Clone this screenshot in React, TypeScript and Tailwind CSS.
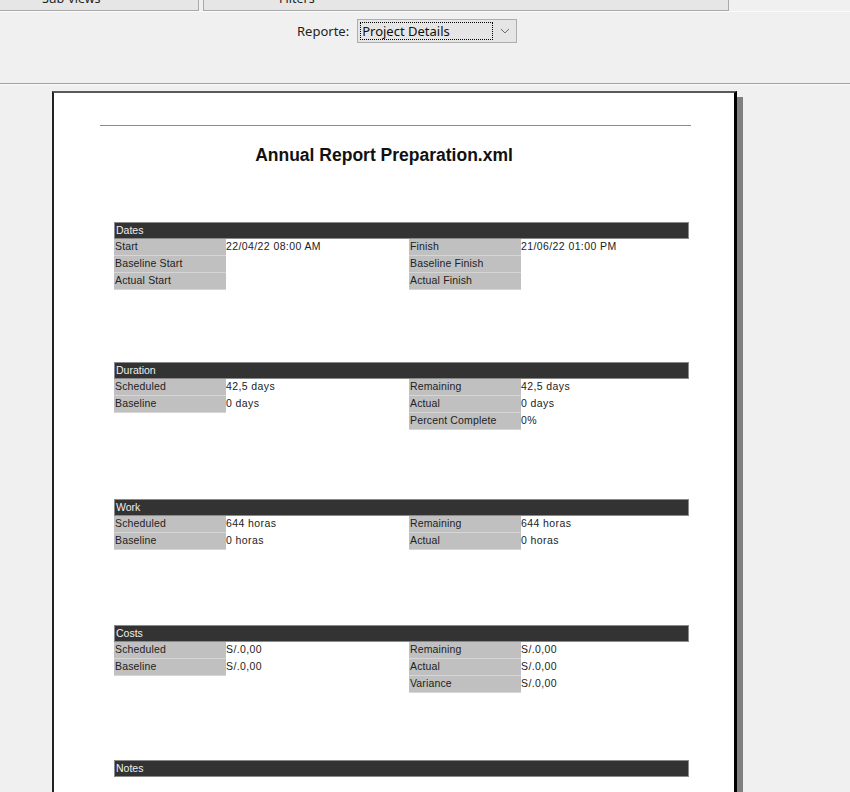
import React from "react";

type Row = [string, string];

const Section = ({ title, left, right, mt }: { title: string; left: Row[]; right: Row[]; mt: string }) => (
  <div className={`${mt} ml-[60px] w-[575px]`}>
    <div className="h-[17px] bg-[#333333] border border-[#8a8a8a] text-[10.5px] leading-[14px] text-[#eeeeee] pl-[1px]">{title}</div>
    <div className="flex">
      <div className="w-[295px] flex flex-col">
        {left.map(([l, v]) => (
          <div key={l} className="flex h-[17px]">
            <div className="w-[112px] bg-[#c0c0c0] border-b border-[#d6d6d6] text-[10.5px] leading-[14px] tracking-[0.15px] text-[#222] pl-[1px]">{l}</div>
            <div className="flex-1 text-[10.5px] leading-[14px] tracking-[0.4px] text-[#222]">{v}</div>
          </div>
        ))}
      </div>
      <div className="flex-1 flex flex-col">
        {right.map(([l, v]) => (
          <div key={l} className="flex h-[17px]">
            <div className="w-[112px] bg-[#c0c0c0] border-b border-[#d6d6d6] text-[10.5px] leading-[14px] tracking-[0.15px] text-[#222] pl-[1px]">{l}</div>
            <div className="flex-1 text-[10.5px] leading-[14px] tracking-[0.4px] text-[#222]">{v}</div>
          </div>
        ))}
      </div>
    </div>
  </div>
);

export default function App() {
  return (
    <div className="w-[850px] h-[792px] overflow-hidden bg-[#f0f0f0] flex flex-col" style={{ fontFamily: '"Liberation Sans", Arial, sans-serif' }}>
      {/* tabs */}
      <div className="h-[11px] flex shrink-0 overflow-hidden">
        <div className="w-[200px] -ml-[1px] h-[11px] bg-[#e6e6e6] border border-t-0 border-[#a9a9a9] relative overflow-hidden">
          <span className="absolute left-[42px] top-[-9px] text-[12.5px] leading-[16px] text-[#222]" style={{ fontFamily: '"Noto Sans", sans-serif' }}>Sub-views</span>
        </div>
        <div className="w-[4px]" />
        <div className="w-[526px] h-[11px] bg-[#e6e6e6] border border-t-0 border-[#a9a9a9] relative overflow-hidden">
          <span className="absolute left-[75px] top-[-9px] text-[12.5px] leading-[16px] text-[#222]" style={{ fontFamily: '"Noto Sans", sans-serif' }}>Filters</span>
        </div>
      </div>
      <div className="h-[1px] bg-[#fafafa] shrink-0" />
      {/* toolbar */}
      <div className="h-[71px] shrink-0 pl-[297px] pt-[7px] flex items-start" style={{ fontFamily: '"Noto Sans", sans-serif' }}>
        <span className="text-[13px] leading-[18px] text-[#222] mt-[3px] mr-[8px]">Reporte:</span>
        <div className="w-[160px] h-[24px] bg-[#e5e5e5] border border-[#adadad] flex items-center pl-[2px]">
          <div className="w-[134px] h-[18px] border border-dotted border-black text-[13px] leading-[16px] pl-[1px] text-[#111]">Project Details</div>
          <svg width="22" height="16" viewBox="0 0 22 16" className="ml-[1px]">
            <path d="M7 6 L11 10 L15 6" fill="none" stroke="#666" strokeWidth="1" />
          </svg>
        </div>
      </div>
      <div className="h-[1px] bg-[#a0a4aa] shrink-0" />
      <div className="h-[1px] bg-[#fafafa] shrink-0" />
      {/* page area */}
      <div className="pl-[52px] pt-[6px] flex-1">
        <div className="w-[685px] h-[800px] bg-white border-l-2 border-l-[#222] border-t-2 border-t-[#5a5a5a] border-r-[3px] border-r-black shadow-[6px_6px_0_0_#808080] pt-[32px]">
          <div className="ml-[46px] w-[591px] h-[1px] bg-[#8c8c8c]" />
          <div className="mt-[19px] h-[20px] leading-[20px] text-center text-[17.5px] font-bold text-[#111] pr-[20px]">Annual Report Preparation.xml</div>
          <Section
            mt="mt-[57px]"
            title="Dates"
            left={[["Start", "22/04/22 08:00 AM"], ["Baseline Start", ""], ["Actual Start", ""]]}
            right={[["Finish", "21/06/22 01:00 PM"], ["Baseline Finish", ""], ["Actual Finish", ""]]}
          />
          <Section
            mt="mt-[72px]"
            title="Duration"
            left={[["Scheduled", "42,5 days"], ["Baseline", "0 days"]]}
            right={[["Remaining", "42,5 days"], ["Actual", "0 days"], ["Percent Complete", "0%"]]}
          />
          <Section
            mt="mt-[69px]"
            title="Work"
            left={[["Scheduled", "644 horas"], ["Baseline", "0 horas"]]}
            right={[["Remaining", "644 horas"], ["Actual", "0 horas"]]}
          />
          <Section
            mt="mt-[75px]"
            title="Costs"
            left={[["Scheduled", "S/.0,00"], ["Baseline", "S/.0,00"]]}
            right={[["Remaining", "S/.0,00"], ["Actual", "S/.0,00"], ["Variance", "S/.0,00"]]}
          />
          <Section mt="mt-[67px]" title="Notes" left={[]} right={[]} />
        </div>
      </div>
    </div>
  );
}
